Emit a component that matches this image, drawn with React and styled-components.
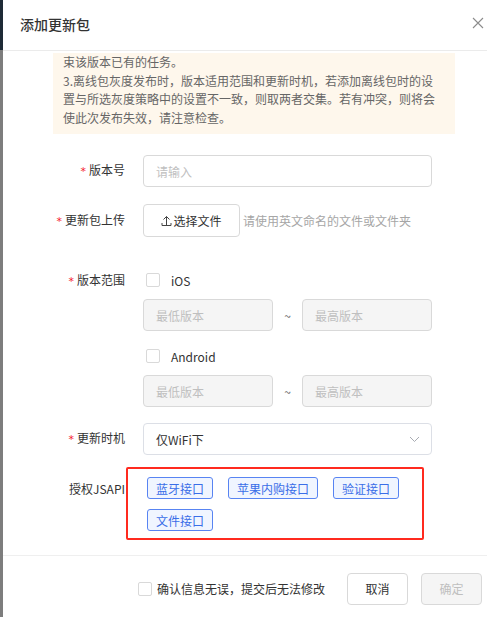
import styled, { createGlobalStyle } from "styled-components";

const GlobalStyle = createGlobalStyle`
    html, body {
        margin: 0;
        padding: 0;
        background: #ffffff;
    }
    body {
        font-family: "Noto Sans CJK SC", "Noto Sans", sans-serif;
        font-size: 12px;
        color: #333333;
    }
    * {
        box-sizing: border-box;
    }
`

const Page = styled.div`
    width: 487px;
    height: 617px;
    display: flex;
    overflow: hidden;
`
const Backdrop = styled.div`
    width: 3px;
    flex-shrink: 0;
    background: linear-gradient(to bottom, #1e2a36 0, #1e2a36 50px, #7d7d7d 50px);
`
const Modal = styled.div`
    flex: 1;
    display: flex;
    flex-direction: column;
    background: #ffffff;
`
const Header = styled.div`
    height: 51px;
    flex-shrink: 0;
    display: flex;
    align-items: center;
    justify-content: space-between;
    padding: 0 2px 2px 17px;
    border-bottom: 1px solid #ebebeb;
`
const Title = styled.div`
    font-size: 14px;
    font-weight: 500;
    color: #333333;
`
const Close = styled.button`
    width: 14px;
    height: 14px;
    padding: 0;
    border: none;
    background: none;
    display: flex;
    align-items: center;
    justify-content: center;
    margin-top: -2px;
`
const Body = styled.div`
    flex: 1;
    overflow: hidden;
    padding-top: 2px;
`
const Notice = styled.div`
    margin: 0 32px 0 50px;
    padding: 0 15px 7px 10px;
    background: #fef7ec;
    color: #666666;
    font-size: 12px;
    line-height: 18.5px;
`
const Row = styled.div`
    display: flex;
    align-items: ${(p) => (p.$top ? "flex-start" : "center")};
    margin-top: ${(p) => p.$mt}px;
`
const Label = styled.div`
    width: 122px;
    flex-shrink: 0;
    margin-right: ${(p) => (p.$gap !== undefined ? p.$gap : 18)}px;
    text-align: right;
    font-size: 12px;
    color: #333333;
    line-height: 22px;
    padding-top: ${(p) => p.$pt || 0}px;
`
const Star = styled.span`
    color: #f5222d;
    margin-right: 3px;
    font-family: "DejaVu Sans", sans-serif;
    font-size: 11px;
`
const Input = styled.div`
    width: ${(p) => p.$w || 289}px;
    height: 32px;
    border: 1px solid #d9d9d9;
    border-radius: 4px;
    background: ${(p) => (p.$disabled ? "#f5f5f5" : "#ffffff")};
    color: #bfbfbf;
    padding: 0 12px;
    display: flex;
    align-items: center;
    font-size: 12px;
`
const UploadButton = styled.button`
    width: 97px;
    height: 33px;
    border: 1px solid #d9d9d9;
    border-radius: 4px;
    background: #ffffff;
    color: #333333;
    font-family: inherit;
    font-size: 12px;
    display: flex;
    align-items: center;
    justify-content: center;
    gap: 1px;
    padding: 0;
`
const Hint = styled.span`
    margin-left: 3px;
    color: #a6a6a6;
    font-size: 12px;
`
const Column = styled.div`
    display: flex;
    flex-direction: column;
`
const CheckLine = styled.label`
    display: flex;
    align-items: center;
    height: 22px;
    padding-left: 3px;
    gap: 11px;
    font-size: 12px;
    color: #333333;
    margin-top: ${(p) => p.$mt || 0}px;
`
const Box = styled.span`
    width: 14px;
    height: 14px;
    border: 1px solid #d9d9d9;
    border-radius: 2px;
    background: #ffffff;
    flex-shrink: 0;
`
const Range = styled.div`
    display: flex;
    align-items: center;
    margin-top: 8px;
`
const Tilde = styled.span`
    width: 29px;
    text-align: center;
    color: #666666;
    font-size: 12px;
`
const Select = styled.div`
    width: 289px;
    height: 32px;
    border: 1px solid #dcdfe6;
    border-radius: 4px;
    padding: 0 11px 0 12px;
    display: flex;
    align-items: center;
    justify-content: space-between;
    color: #333333;
    font-size: 12px;
`
const TagBox = styled.div`
    width: 298px;
    border: 2px solid #ff2a1f;
    border-radius: 2px;
    padding: 8px 10px 7px 19px;
    display: flex;
    flex-wrap: wrap;
    gap: 10px 15px;
`
const Tag = styled.span`
    height: 22px;
    padding: 0 8px;
    border: 1px solid #5884f2;
    border-radius: 3px;
    background: #f0f5ff;
    color: #3a6ee8;
    font-size: 12px;
    display: flex;
    align-items: center;
`
const Footer = styled.div`
    height: 62px;
    flex-shrink: 0;
    border-top: 1px solid #efefef;
    display: flex;
    align-items: center;
    justify-content: flex-end;
    padding: 4px 5px 0 0;
`
const Confirm = styled.label`
    display: flex;
    align-items: center;
    gap: 5px;
    font-size: 12px;
    color: #333333;
    margin-right: 22px;
`
const Button = styled.button`
    width: 61px;
    height: 32px;
    border: 1px solid #d9d9d9;
    border-radius: 4px;
    background: ${(p) => (p.$disabled ? "#f5f5f5" : "#ffffff")};
    color: ${(p) => (p.$disabled ? "#bfbfbf" : "#333333")};
    font-family: inherit;
    font-size: 12px;
    margin-left: ${(p) => p.$ml || 0}px;
    padding: 0;
`

const CloseIcon = () => (
    <svg width="12" height="12" viewBox="0 0 12 12">
        <path d="M1 1 L11 11 M11 1 L1 11" stroke="#8c8c8c" strokeWidth="1.1" fill="none" />
    </svg>
);

const UploadIcon = () => (
    <svg width="11" height="12" viewBox="0 0 11 12">
        <path d="M5.5 1.5 V10 M2.5 4.5 L5.5 1.5 L8.5 4.5 M1 8 V10.5 H10 V8" stroke="#444" strokeWidth="1" fill="none" />
    </svg>
);

const Chevron = () => (
    <svg width="11" height="7" viewBox="0 0 11 7">
        <path d="M1 1 L5.5 5.5 L10 1" stroke="#a8abb2" strokeWidth="1" fill="none" />
    </svg>
);

const tags = ["蓝牙接口", "苹果内购接口", "验证接口", "文件接口"];

const platforms = [
    { name: "iOS", mt: 0 },
    { name: "Android", mt: 14 },
];

const App = () => {
    return (
        <>
            <GlobalStyle />
            <Page>
                <Backdrop />
                <Modal>
                    <Header>
                        <Title>添加更新包</Title>
                        <Close><CloseIcon /></Close>
                    </Header>
                    <Body>
                        <Notice>
                            束该版本已有的任务。<br />
                            3.离线包灰度发布时，版本适用范围和更新时机，若添加离线包时的设置与所选灰度策略中的设置不一致，则取两者交集。若有冲突，则将会使此次发布失效，请注意检查。
                        </Notice>
                        <Row $mt={21}>
                            <Label><Star>*</Star>版本号</Label>
                            <Input>请输入</Input>
                        </Row>
                        <Row $mt={17}>
                            <Label><Star>*</Star>更新包上传</Label>
                            <UploadButton><UploadIcon />选择文件</UploadButton>
                            <Hint>请使用英文命名的文件或文件夹</Hint>
                        </Row>
                        <Row $mt={32} $top>
                            <Label><Star>*</Star>版本范围</Label>
                            <Column>
                                {platforms.map((p) => (
                                    <div key={p.name}>
                                        <CheckLine $mt={p.mt}><Box />{p.name}</CheckLine>
                                        <Range>
                                            <Input $w={130} $disabled>最低版本</Input>
                                            <Tilde>~</Tilde>
                                            <Input $w={130} $disabled>最高版本</Input>
                                        </Range>
                                    </div>
                                ))}
                            </Column>
                        </Row>
                        <Row $mt={16}>
                            <Label><Star>*</Star>更新时机</Label>
                            <Select>仅WiFi下<Chevron /></Select>
                        </Row>
                        <Row $mt={12} $top>
                            <Label $gap={1} $pt={11}>授权JSAPI</Label>
                            <TagBox>
                                {tags.map((t) => (
                                    <Tag key={t}>{t}</Tag>
                                ))}
                            </TagBox>
                        </Row>
                    </Body>
                    <Footer>
                        <Confirm><Box />确认信息无误，提交后无法修改</Confirm>
                        <Button>取消</Button>
                        <Button $ml={13} $disabled>确定</Button>
                    </Footer>
                </Modal>
            </Page>
        </>
    );
};

export default App;
